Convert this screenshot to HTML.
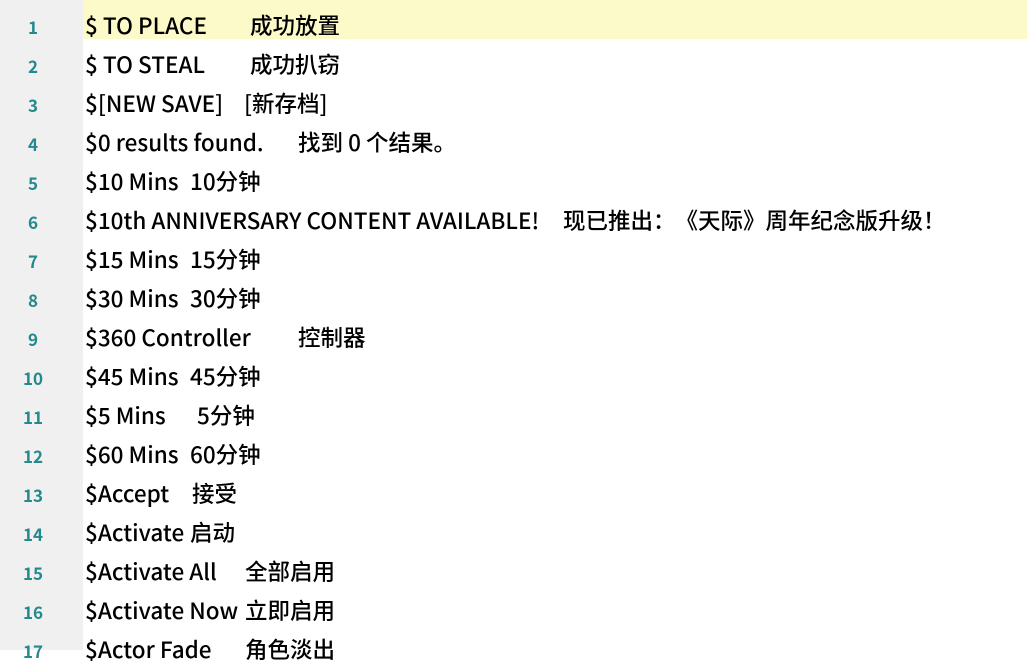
<!DOCTYPE html>
<html><head><meta charset="utf-8"><style>
body{margin:0;width:1027px;height:650px;overflow:hidden;background:#fff;position:relative;font-family:"Noto Sans CJK SC","Liberation Sans",sans-serif;}
#g{position:absolute;left:0;top:0;width:83px;height:650px;background:#f0f0f0;}
#hl{position:absolute;left:83px;top:0;width:944px;height:39px;background:#fdfac9;}
.n{position:absolute;left:0;width:66px;text-align:center;font-size:17px;font-weight:700;color:#23898c;line-height:39px;}
.t{position:absolute;font-size:22.5px;font-weight:500;color:#000;line-height:39px;white-space:pre;font-feature-settings:"chws" 0,"halt" 0,"palt" 0;text-spacing-trim:space-all;}
</style></head><body>
<div id="g"></div><div id="hl"></div>
<div class="n" style="top:7px">1</div><div class="t" style="left:85px;top:6px">$ TO PLACE</div><div class="t" style="left:250px;top:6px">成功放置</div>
<div class="n" style="top:46px">2</div><div class="t" style="left:85px;top:45px">$ TO STEAL</div><div class="t" style="left:250px;top:45px">成功扒窃</div>
<div class="n" style="top:85px">3</div><div class="t" style="left:85px;top:84px">$[NEW SAVE]</div><div class="t" style="left:244px;top:84px">[新存档]</div>
<div class="n" style="top:124px">4</div><div class="t" style="left:85px;top:123px">$0 results found.</div><div class="t" style="left:298px;top:123px">找到 0 个结果。</div>
<div class="n" style="top:163px">5</div><div class="t" style="left:85px;top:162px">$10 Mins</div><div class="t" style="left:190px;top:162px">10分钟</div>
<div class="n" style="top:202px">6</div><div class="t" style="left:85px;top:201px">$10th ANNIVERSARY CONTENT AVAILABLE!</div><div class="t" style="left:563px;top:201px">现已推出：《天际》周年纪念版升级！</div>
<div class="n" style="top:241px">7</div><div class="t" style="left:85px;top:240px">$15 Mins</div><div class="t" style="left:190px;top:240px">15分钟</div>
<div class="n" style="top:280px">8</div><div class="t" style="left:85px;top:279px">$30 Mins</div><div class="t" style="left:190px;top:279px">30分钟</div>
<div class="n" style="top:319px">9</div><div class="t" style="left:85px;top:318px">$360 Controller</div><div class="t" style="left:298px;top:318px">控制器</div>
<div class="n" style="top:358px">10</div><div class="t" style="left:85px;top:357px">$45 Mins</div><div class="t" style="left:190px;top:357px">45分钟</div>
<div class="n" style="top:397px">11</div><div class="t" style="left:85px;top:396px">$5 Mins</div><div class="t" style="left:197px;top:396px">5分钟</div>
<div class="n" style="top:436px">12</div><div class="t" style="left:85px;top:435px">$60 Mins</div><div class="t" style="left:190px;top:435px">60分钟</div>
<div class="n" style="top:475px">13</div><div class="t" style="left:85px;top:474px">$Accept</div><div class="t" style="left:192px;top:474px">接受</div>
<div class="n" style="top:514px">14</div><div class="t" style="left:85px;top:513px">$Activate</div><div class="t" style="left:190px;top:513px">启动</div>
<div class="n" style="top:553px">15</div><div class="t" style="left:85px;top:552px">$Activate All</div><div class="t" style="left:245px;top:552px">全部启用</div>
<div class="n" style="top:592px">16</div><div class="t" style="left:85px;top:591px">$Activate Now</div><div class="t" style="left:245px;top:591px">立即启用</div>
<div class="n" style="top:631px">17</div><div class="t" style="left:85px;top:630px">$Actor Fade</div><div class="t" style="left:245px;top:630px">角色淡出</div>
</body></html>
